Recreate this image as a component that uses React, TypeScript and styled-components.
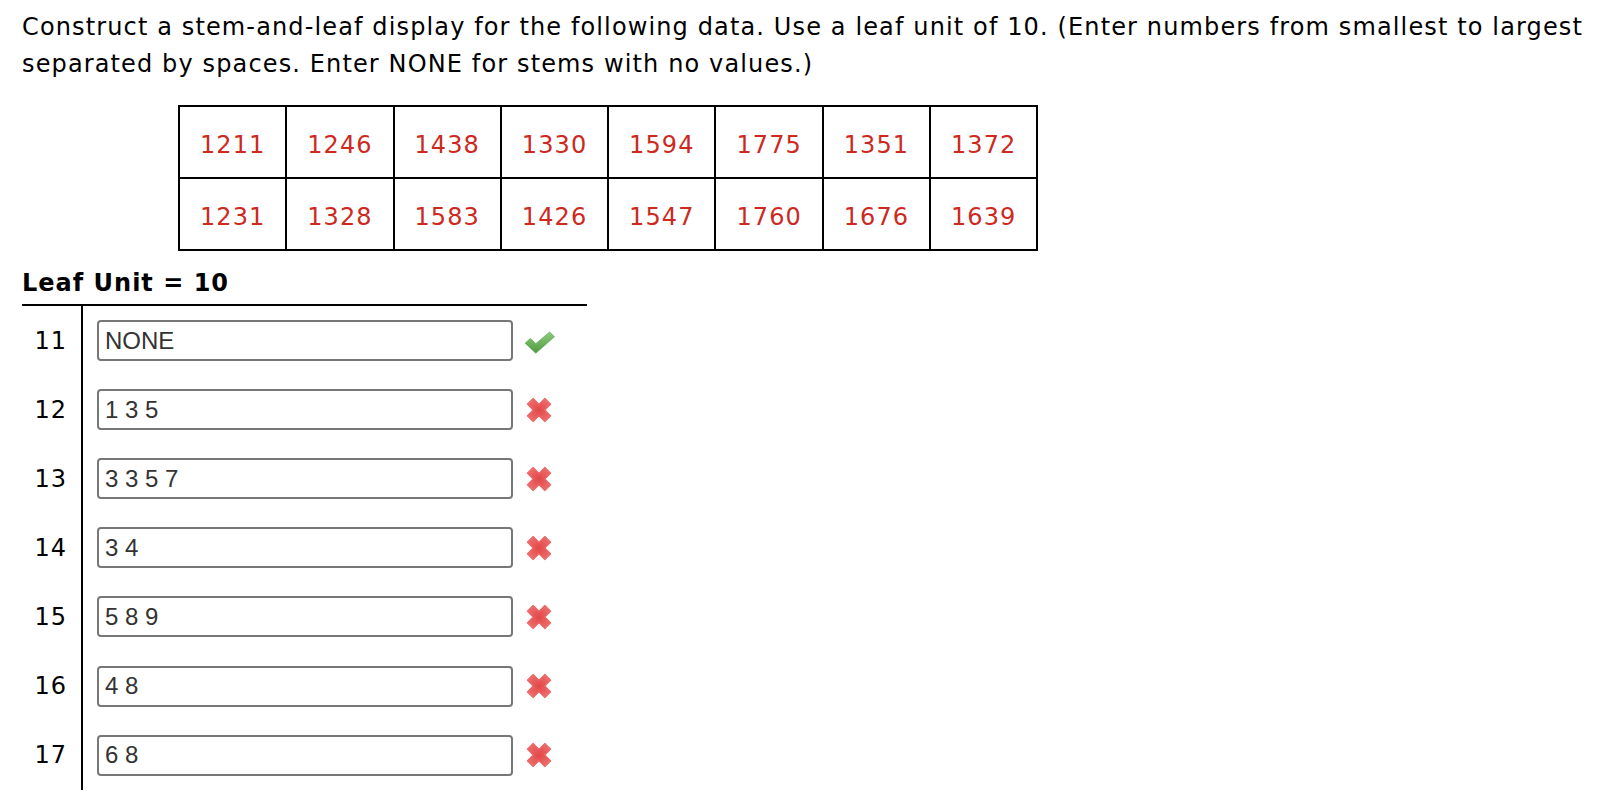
import React from 'react';
import styled, { createGlobalStyle } from 'styled-components';

const GlobalStyle = createGlobalStyle`
  html, body {
    margin: 0;
    padding: 0;
    background: #fff;
  }
  body {
    font-family: "DejaVu Sans", Verdana, sans-serif;
    color: #000;
  }
`;

const Page = styled.div`
  padding: 9px 0 0 22px;
`;

const Prompt = styled.p`
  margin: 0;
  font-size: 24px;
  line-height: 37px;
  letter-spacing: 1.13px;
  white-space: nowrap;
`;

const DataTable = styled.table`
  border-collapse: collapse;
  margin: 22px 0 0 156px;
`;

const Cell = styled.td`
  border: 2px solid #000;
  width: 105.3px;
  height: 65px;
  padding: 5px 0 0;
  text-align: center;
  color: #cc2a1f;
  font-size: 24px;
  letter-spacing: 1.1px;
`;

const UnitLabel = styled.div`
  margin-top: 18px;
  font-weight: bold;
  font-size: 24px;
  line-height: 28px;
  letter-spacing: 1px;
`;

const Display = styled.div`
  margin-top: 7px;
  width: 565px;
  border-top: 2px solid #000;
`;

const Row = styled.div`
  display: flex;
  align-items: center;
  height: 69.1px;
`;

const Stem = styled.div`
  width: 45px;
  text-align: right;
  font-size: 24px;
  letter-spacing: 1px;
  padding-right: 14px;
`;

const LeafCell = styled.div`
  align-self: stretch;
  display: flex;
  align-items: center;
  border-left: 2px solid #000;
  padding-left: 14px;
`;

const LeafInput = styled.input`
  box-sizing: border-box;
  width: 416px;
  height: 41px;
  border: 2px solid #777;
  border-radius: 4px;
  padding: 0 6px;
  font-family: "Liberation Sans", Arial, sans-serif;
  font-size: 24px;
  color: #333;
  background: #fff;
  outline: none;
`;

const Mark = styled.svg`
  margin-left: 10px;
  width: 32px;
  height: 32px;
`;

const CheckMark = () => (
  <Mark viewBox="0 0 30 30">
    <defs>
      <linearGradient id="chk" x1="0" y1="0" x2="0" y2="1">
        <stop offset="0" stopColor="#8fcd7e" />
        <stop offset="1" stopColor="#4f9a3f" />
      </linearGradient>
    </defs>
    <path d="M2 17 L7 12.5 L12 17.5 L25 6.5 L29.5 11 L12 26.5 Z" fill="url(#chk)" stroke="#5a9e4b" strokeWidth="0.6" strokeLinejoin="round" />
  </Mark>
);

const CrossMark = () => (
  <Mark viewBox="0 0 30 30">
    <defs>
      <radialGradient id="crs" cx="0.5" cy="0.5" r="0.6">
        <stop offset="0" stopColor="#e24848" />
        <stop offset="1" stopColor="#f07070" />
      </radialGradient>
    </defs>
    <path
      d="M4 9.5 L9.5 4 L15 9.5 L20.5 4 L26 9.5 L20.5 15 L26 20.5 L20.5 26 L15 20.5 L9.5 26 L4 20.5 L9.5 15 Z"
      fill="url(#crs)"
      stroke="#e86a6a"
      strokeWidth="1"
      strokeLinejoin="round"
    />
  </Mark>
);

const data = [
  [1211, 1246, 1438, 1330, 1594, 1775, 1351, 1372],
  [1231, 1328, 1583, 1426, 1547, 1760, 1676, 1639],
];

const rows = [
  { stem: 11, leaves: 'NONE', ok: true },
  { stem: 12, leaves: '1 3 5', ok: false },
  { stem: 13, leaves: '3 3 5 7', ok: false },
  { stem: 14, leaves: '3 4', ok: false },
  { stem: 15, leaves: '5 8 9', ok: false },
  { stem: 16, leaves: '4 8', ok: false },
  { stem: 17, leaves: '6 8', ok: false },
];

export default function App() {
  return (
    <Page>
      <GlobalStyle />
      <Prompt>
        Construct a stem-and-leaf display for the following data. Use a leaf unit of 10. (Enter numbers from smallest to largest
        <br />
        separated by spaces. Enter NONE for stems with no values.)
      </Prompt>
      <DataTable>
        <tbody>
          {data.map((r, i) => (
            <tr key={i}>
              {r.map((v) => (
                <Cell key={v}>{v}</Cell>
              ))}
            </tr>
          ))}
        </tbody>
      </DataTable>
      <UnitLabel>Leaf Unit = 10</UnitLabel>
      <Display>
        {rows.map((r) => (
          <Row key={r.stem}>
            <Stem>{r.stem}</Stem>
            <LeafCell>
              <LeafInput defaultValue={r.leaves} readOnly />
              {r.ok ? <CheckMark /> : <CrossMark />}
            </LeafCell>
          </Row>
        ))}
      </Display>
    </Page>
  );
}
